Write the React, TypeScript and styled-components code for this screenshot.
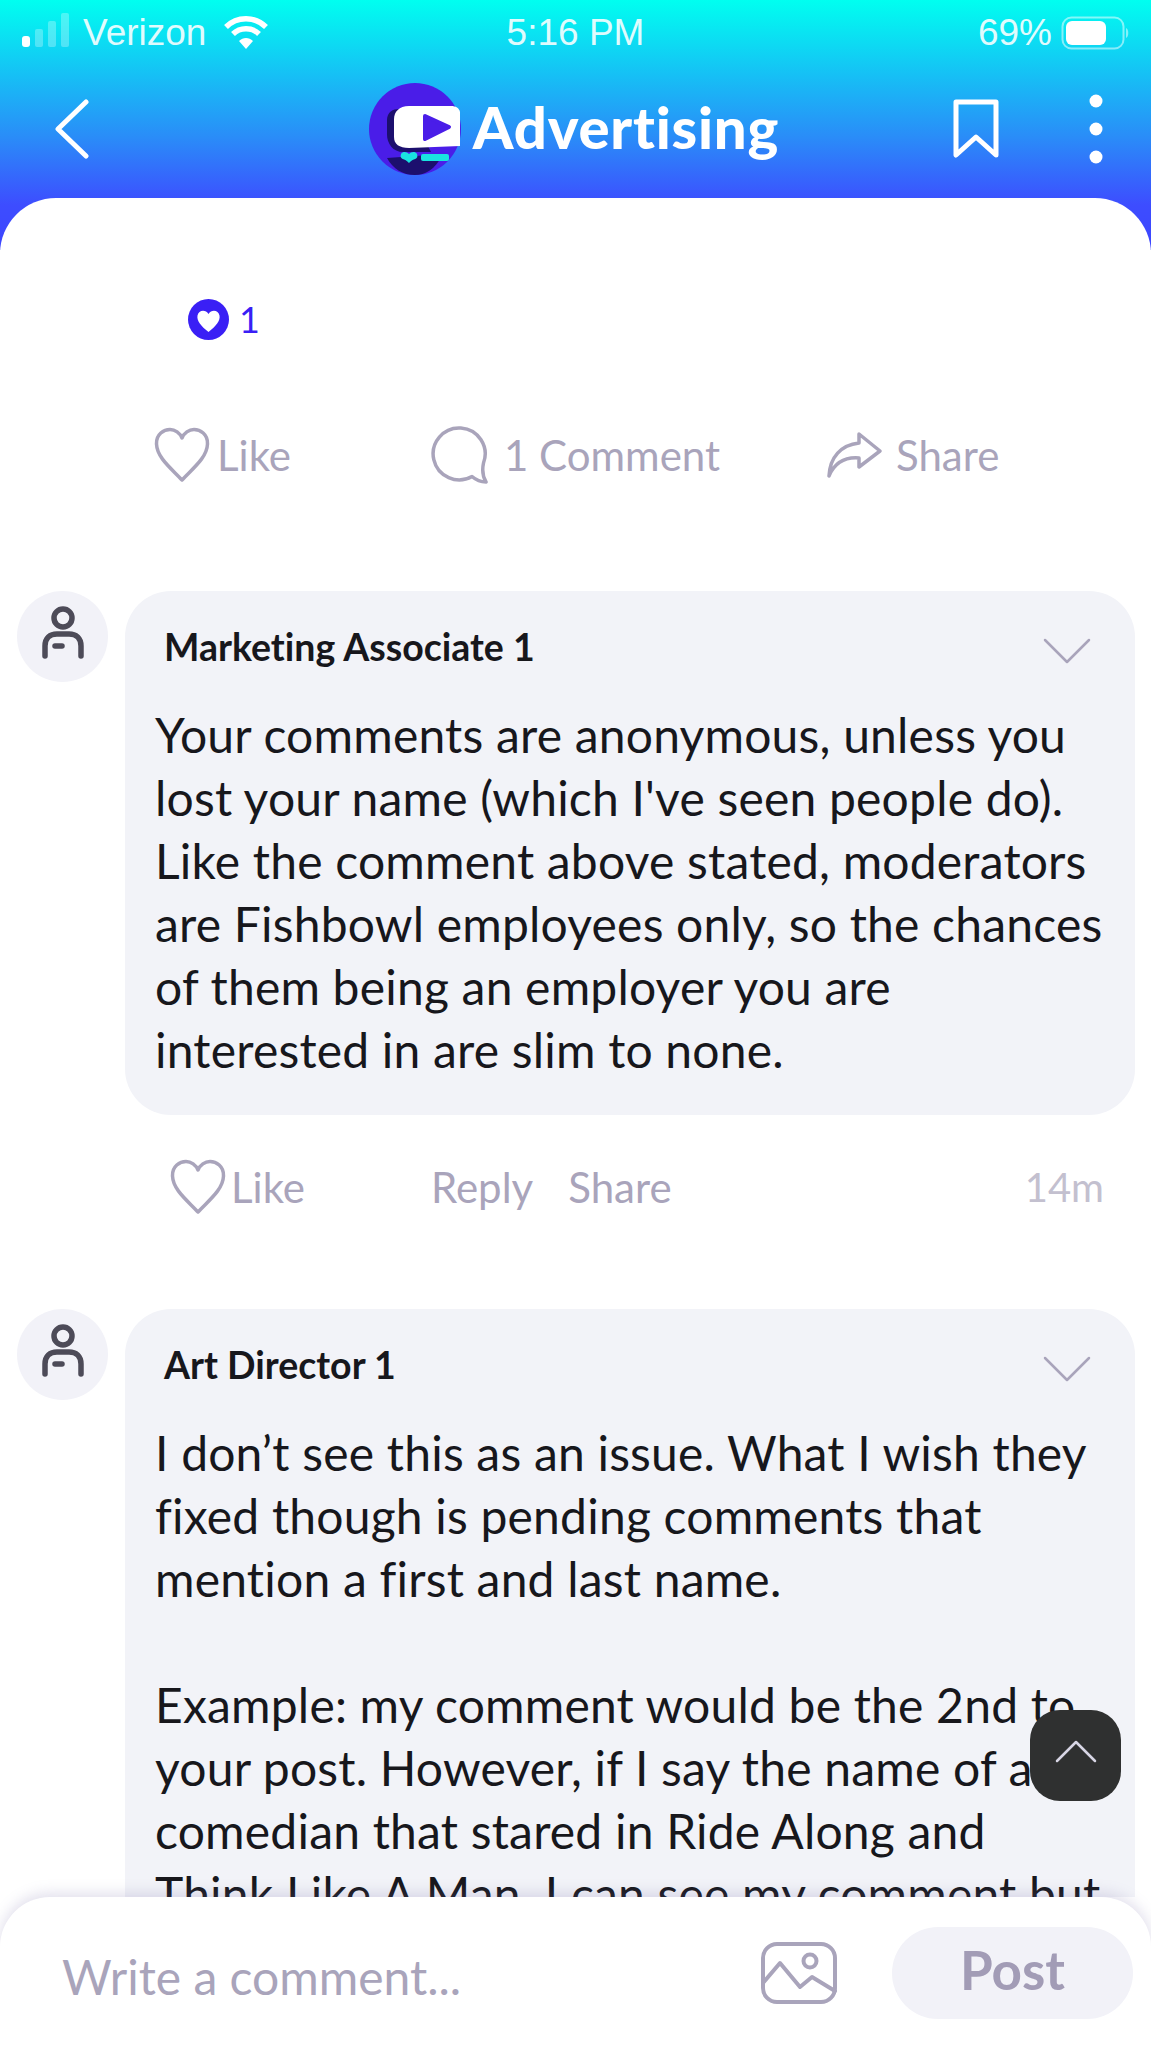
import React from 'react';
import styled, { createGlobalStyle } from 'styled-components';

const GlobalStyle = createGlobalStyle`
  html, body {
    margin: 0;
    padding: 0;
    background: #fff;
    font-family: 'Lato', 'Open Sans', sans-serif;
    font-variant-ligatures: none;
  }
`;

const Screen = styled.div`
  position: relative;
  width: 1151px;
  height: 2048px;
  display: flex;
  flex-direction: column;
  overflow: hidden;
  background: linear-gradient(180deg, #00fff0 0%, #16c0f5 30%, #2a8cf8 55%, #3d4dff 82%, #3d45ff 100%) no-repeat;
  background-size: 100% 250px;
`;

const StatusBar = styled.div`
  height: 66px;
  display: grid;
  grid-template-columns: 1fr auto 1fr;
  align-items: center;
  padding: 0 20px;
  color: rgba(255, 255, 255, 0.88);
  font-family: 'Liberation Sans', sans-serif;
  font-size: 37px;
`;

const StatusLeft = styled.div`
  display: flex;
  align-items: center;
  gap: 11px;

  svg:first-child {
    margin-bottom: 6px;
  }

  svg:last-child {
    margin-left: 6px;
  }
`;

const StatusRight = styled.div`
  display: flex;
  align-items: center;
  justify-content: flex-end;
  gap: 9px;
`;

const NavBar = styled.div`
  height: 126px;
  display: grid;
  grid-template-columns: 1fr auto 1fr;
  align-items: center;
  padding: 0 47px 6px 44px;

  > svg:first-child {
    margin-left: 10px;
  }
`;

const NavTitle = styled.div`
  display: flex;
  align-items: center;
  gap: 12px;
  font-size: 58px;
  font-weight: 900;
  letter-spacing: 0.8px;
  color: #fff;
`;

const NavLabel = styled.span`
  margin-top: -5px;
`;

const NavActions = styled.div`
  display: flex;
  align-items: center;
  justify-content: flex-end;
  gap: 88px;
`;

const Card = styled.div`
  flex: 1;
  min-height: 0;
  overflow: hidden;
  background: #fff;
  border-radius: 56px 56px 0 0;
  padding-top: 101px;
`;

const Reactions = styled.div`
  display: flex;
  align-items: center;
  gap: 10px;
  height: 40px;
  padding-left: 188px;
  font-size: 36px;
  color: #3a1ff5;
`;

const PostActions = styled.div`
  display: flex;
  align-items: center;
  height: 60px;
  margin-top: 86px;
  padding-left: 154px;
  font-size: 42px;
  color: #a9a4bb;
`;

const ActionItem = styled.div<{ $width: number; $gap: number }>`
  display: flex;
  align-items: center;
  width: ${p => p.$width}px;
  gap: ${p => p.$gap}px;
`;

const Comment = styled.div`
  display: flex;
  align-items: flex-start;
  gap: 17px;
  padding: 0 16px 0 17px;
`;

const Avatar = styled.div`
  flex: none;
  width: 91px;
  height: 91px;
  box-sizing: border-box;
  padding-bottom: 8px;
  border-radius: 50%;
  background: #f2f2f8;
  display: flex;
  align-items: center;
  justify-content: center;
`;

const Bubble = styled.div<{ $clipped?: boolean }>`
  flex: 1;
  min-width: 0;
  background: #f2f3f8;
  border-radius: 46px;
  padding: 28px 24px ${p => (p.$clipped ? '120px' : '34px')} 30px;
`;

const BubbleHeader = styled.div`
  display: flex;
  align-items: center;
  justify-content: space-between;
  padding: 0 20px 0 9px;
  height: 54px;
  font-size: 37.5px;
  font-weight: 700;
  color: #17171c;

  svg {
    margin-top: 10px;
  }
`;

const BodyText = styled.div`
  margin-top: 30px;
  font-size: 48px;
  letter-spacing: 0.2px;
  line-height: 63px;
  color: #17171c;
  white-space: pre-line;
`;

const CommentFirst = styled.div`
  margin-top: 106px;
`;

const CommentNext = styled.div`
  margin-top: 92px;
`;

const MetaRow = styled.div`
  display: flex;
  align-items: center;
  height: 60px;
  margin-top: 42px;
  padding: 0 47px 0 170px;
  font-size: 42px;
  color: #a9a4bb;
`;

const MetaLike = styled.div`
  display: flex;
  align-items: center;
  gap: 5px;
  width: 261px;
`;

const MetaLink = styled.div`
  margin-right: 35px;
`;

const MetaTime = styled.div`
  margin-left: auto;
  font-size: 40px;
  color: #c3c0cf;
`;

const Composer = styled.div`
  flex: none;
  height: 151px;
  position: relative;
  z-index: 1;
  display: flex;
  align-items: center;
  background: #fff;
  border-radius: 50px 50px 0 0;
  box-shadow: 0 -4px 14px rgba(120, 110, 170, 0.22);
  padding: 0 18px 0 62px;
`;

const Placeholder = styled.div`
  flex: 1;
  font-size: 48px;
  color: #a9a4bb;
  padding-top: 8px;
`;

const PostButton = styled.div`
  width: 241px;
  height: 92px;
  box-sizing: border-box;
  padding-bottom: 6px;
  margin-left: 54px;
  border-radius: 46px;
  background: #f2f2f8;
  display: flex;
  align-items: center;
  justify-content: center;
  font-size: 53px;
  font-weight: 700;
  color: #a29cb6;
`;

const ScrollTop = styled.div`
  position: absolute;
  right: 30px;
  top: 1710px;
  width: 91px;
  height: 91px;
  box-sizing: border-box;
  padding-bottom: 9px;
  border-radius: 30px;
  background: #2f3030;
  display: flex;
  align-items: center;
  justify-content: center;
  z-index: 2;
`;

const Line = (p: React.SVGProps<SVGSVGElement>) => (
  <svg fill="none" strokeLinecap="round" strokeLinejoin="round" {...p} />
);

const SignalIcon = () => (
  <svg width="52" height="36" viewBox="0 0 52 36">
    <rect x="2" y="24" width="8" height="11" rx="3" fill="#fff" />
    <rect x="15" y="17" width="8" height="18" rx="2" fill="#fff" fillOpacity="0.28" />
    <rect x="28" y="9" width="8" height="26" rx="2" fill="#fff" fillOpacity="0.28" />
    <rect x="41" y="1" width="8" height="34" rx="2" fill="#fff" fillOpacity="0.28" />
  </svg>
);

const WifiIcon = () => (
  <Line width="46" height="36" viewBox="0 0 46 36" stroke="#fff" strokeWidth="5.5" strokeLinecap="butt">
    <path d="M3 12 C14 1 32 1 43 12" />
    <path d="M10 19 C17 12 29 12 36 19" />
    <path d="M23 34 L16 26 C20 22 26 22 30 26 Z" fill="#fff" stroke="none" />
  </Line>
);

const BatteryIcon = () => (
  <svg width="70" height="34" viewBox="0 0 70 34">
    <rect x="1.5" y="1.5" width="61" height="31" rx="9" fill="none" stroke="#fff" strokeOpacity="0.5" strokeWidth="2" />
    <rect x="5" y="5" width="40" height="24" rx="6" fill="#fff" />
    <path d="M65 12 C68 13 68 21 65 22 Z" fill="#fff" fillOpacity="0.5" />
  </svg>
);

const BackIcon = () => (
  <Line width="36" height="60" viewBox="0 0 36 60" stroke="#fff" strokeWidth="5">
    <path d="M32 3 L4 30 L32 57" />
  </Line>
);

const LogoIcon = () => (
  <svg width="92" height="94" viewBox="0 0 92 94">
    <circle cx="46" cy="47" r="46" fill="#4a1de8" />
    <path d="M18 38 C18 30 24 27 30 27 L40 27 L62 70 L34 70 C24 70 18 62 18 52 Z" fill="#1c0f6e" />
    <path d="M18 76 L74 72 C66 88 56 93 46 93 C34 93 24 87 18 76 Z" fill="#1c0f6e" />
    <path d="M40 24 C30 24 25 30 25 37 L25 55 C25 62 30 66 40 66 L91 64 L91 30 C90 26 87 24 82 24 Z" fill="#fff" />
    <path d="M56 34 L80 45 L56 57 Z" fill="#4a1de8" stroke="#4a1de8" strokeWidth="4" strokeLinejoin="round" />
    <path d="M40 81 C36 76 30 78 32 72 C34 69 38 70 40 72 C42 70 46 69 48 72 C50 78 44 76 40 81 Z" fill="#19e3e0" />
    <rect x="52" y="72" width="28" height="7" rx="2" fill="#19e3e0" />
  </svg>
);

const BookmarkIcon = () => (
  <Line width="48" height="60" viewBox="0 0 48 60" stroke="#fff" strokeWidth="5">
    <path d="M4 3 H44 V56 L24 38 L4 56 Z" />
  </Line>
);

const DotsIcon = () => (
  <svg width="16" height="70" viewBox="0 0 16 70">
    <circle cx="8" cy="7" r="6.5" fill="#fff" />
    <circle cx="8" cy="35" r="6.5" fill="#fff" />
    <circle cx="8" cy="63" r="6.5" fill="#fff" />
  </svg>
);

const ReactionIcon = () => (
  <svg width="41" height="41" viewBox="0 0 41 41">
    <circle cx="20.5" cy="20.5" r="20.5" fill="#3a1ff5" />
    <path d="M20.5 33 C13 27 8.5 22 9.5 16.5 C10.5 11 17.5 10 20.5 15 C23.5 10 30.5 11 31.5 16.5 C32.5 22 28 27 20.5 33 Z" fill="#fff" />
  </svg>
);

const HeartIcon = () => (
  <Line width="56" height="56" viewBox="0 0 56 56" stroke="#a9a4bb" strokeWidth="3.5">
    <path d="M28 53 C18 42 3 31 2.5 17 C2 7 10 2.5 16 2.5 C21 2.5 26 6 28 11 C30 6 35 2.5 40 2.5 C46 2.5 54 7 53.5 17 C53 31 38 42 28 53 Z" />
  </Line>
);

const CommentIcon = () => (
  <Line width="60" height="60" viewBox="0 0 60 60" stroke="#a9a4bb" strokeWidth="3.5">
    <path d="M42 51.5 A26 26 0 1 1 53.5 38 C52 45 53 52 56 57 C51 57 46 55 42 51.5 Z" />
  </Line>
);

const ShareIcon = () => (
  <Line width="56" height="48" viewBox="0 0 56 48" stroke="#a9a4bb" strokeWidth="3.5">
    <path d="M33 3 L54 20 L33 36 L33 27 C20 26 9 31 3 45 C4 26 15 14 33 12 Z" />
  </Line>
);

const PersonIcon = () => (
  <Line width="44" height="54" viewBox="0 0 44 54" stroke="#4d4b58" strokeWidth="5.5">
    <circle cx="22" cy="12" r="9" />
    <path d="M4 50 L4 40 C4 32 9 28 16 28 L28 28 C35 28 40 32 40 40 L40 50" />
    <path d="M14 40 L21 40" />
  </Line>
);

const ChevronDown = () => (
  <Line width="48" height="26" viewBox="0 0 48 26" stroke="#a9a4bb" strokeWidth="2.5">
    <path d="M2 2 L24 24 L46 2" />
  </Line>
);

const ChevronUp = () => (
  <Line width="42" height="23" viewBox="0 0 42 23" stroke="#d8d6e5" strokeWidth="2.5">
    <path d="M2 21 L21 2 L40 21" />
  </Line>
);

const ImageIcon = () => (
  <Line width="78" height="64" viewBox="0 0 78 64" stroke="#a9a4bb" strokeWidth="4">
    <rect x="3" y="3" width="72" height="58" rx="14" />
    <circle cx="50" cy="20" r="6.5" />
    <path d="M3 42 L20 22 L40 46 L52 36 L75 50" />
  </Line>
);

const App: React.FC = () => {
  return (
    <Screen>
      <GlobalStyle />
      <StatusBar>
        <StatusLeft>
          <SignalIcon />
          <span>Verizon</span>
          <WifiIcon />
        </StatusLeft>
        <span>5:16 PM</span>
        <StatusRight>
          <span>69%</span>
          <BatteryIcon />
        </StatusRight>
      </StatusBar>

      <NavBar>
        <BackIcon />
        <NavTitle>
          <LogoIcon />
          <NavLabel>Advertising</NavLabel>
        </NavTitle>
        <NavActions>
          <BookmarkIcon />
          <DotsIcon />
        </NavActions>
      </NavBar>

      <Card>
        <Reactions>
          <ReactionIcon />
          <span>1</span>
        </Reactions>

        <PostActions>
          <ActionItem $width={276} $gap={7}>
            <HeartIcon />
            Like
          </ActionItem>
          <ActionItem $width={396} $gap={14}>
            <CommentIcon />1 Comment
          </ActionItem>
          <ActionItem $width={200} $gap={14}>
            <ShareIcon />
            Share
          </ActionItem>
        </PostActions>

        <CommentFirst>
          <Comment>
            <Avatar>
              <PersonIcon />
            </Avatar>
            <Bubble>
              <BubbleHeader>
                Marketing Associate 1
                <ChevronDown />
              </BubbleHeader>
              <BodyText>
                Your comments are anonymous, unless you lost your name (which I've seen people do). Like the comment
                above stated, moderators are Fishbowl employees only, so the chances of them being an employer you are
                interested in are slim to none.
              </BodyText>
            </Bubble>
          </Comment>
          <MetaRow>
            <MetaLike>
              <HeartIcon />
              Like
            </MetaLike>
            <MetaLink>Reply</MetaLink>
            <MetaLink>Share</MetaLink>
            <MetaTime>14m</MetaTime>
          </MetaRow>
        </CommentFirst>

        <CommentNext>
          <Comment>
            <Avatar>
              <PersonIcon />
            </Avatar>
            <Bubble $clipped>
              <BubbleHeader>
                Art Director 1
                <ChevronDown />
              </BubbleHeader>
              <BodyText>
                {`I don’t see this as an issue. What I wish they fixed though is pending comments that mention a first and last name.

Example: my comment would be the 2nd to your post. However, if I say the name of a comedian that stared in Ride Along and Think Like A Man. I can see my comment but`}
              </BodyText>
            </Bubble>
          </Comment>
        </CommentNext>
      </Card>

      <ScrollTop>
        <ChevronUp />
      </ScrollTop>

      <Composer>
        <Placeholder>Write a comment...</Placeholder>
        <ImageIcon />
        <PostButton>Post</PostButton>
      </Composer>
    </Screen>
  );
};

export default App;
